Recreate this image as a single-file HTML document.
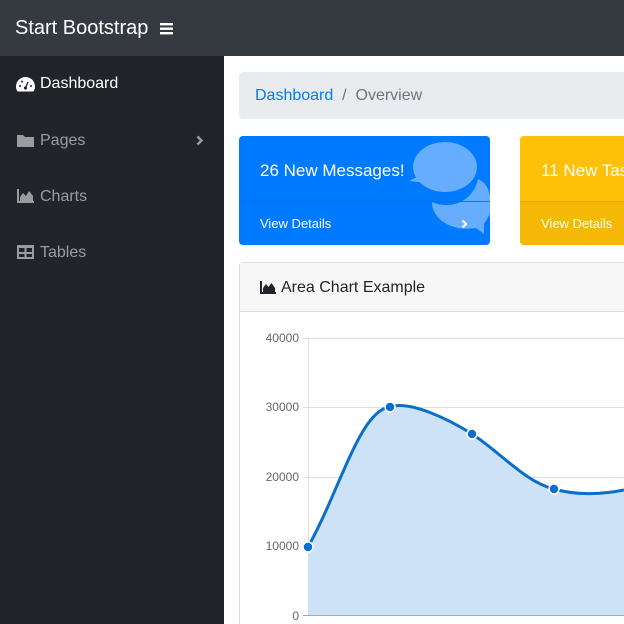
<!DOCTYPE html>
<html><head><style>
*{margin:0;padding:0;box-sizing:border-box}
html,body{width:624px;height:624px;overflow:hidden}
body{font-family:"Liberation Sans",sans-serif;background:#fff;position:relative}
.top{position:absolute;left:0;top:0;width:624px;height:56px;background:#343a40}
.brand{position:absolute;left:15px;top:17px;color:#fff;font-size:20px}
.side{position:absolute;left:0;top:56px;width:224px;height:568px;background:#212529}
.nav{position:absolute;left:40px;font-size:16px;color:#9a9da0}
.abs{position:absolute}
.bc{position:absolute;left:239px;top:72px;width:400px;height:47px;background:#e9ecef;border-radius:4px;font-size:16px;color:#6c757d;padding:15px 16px}
.card{position:absolute;top:136px;height:109px;border-radius:4px;overflow:hidden;color:#fff}
</style></head><body>
<div class="top"><div class="brand">Start Bootstrap</div>
<svg class="abs" style="left:160px;top:22px" width="13" height="13"><rect y="1" width="13" height="2.4" fill="#fff"/><rect y="5.5" width="13" height="2.4" fill="#fff"/><rect y="10" width="13" height="2.4" fill="#fff"/></svg></div>
<div class="side">
<svg class="abs" style="left:16px;top:21px" width="19" height="15" viewBox="0 0 19 15"><path d="M9.5 0A9.5 9.5 0 0 0 0 9.5c0 2 .6 3.8 1.6 5h15.8c1-1.2 1.6-3 1.6-5A9.5 9.5 0 0 0 9.5 0z" fill="#fff"/><circle cx="9.5" cy="11" r="1.6" fill="#212529"/><path d="M9.5 11L12 5" stroke="#212529" stroke-width="1.3"/><circle cx="4" cy="9" r="1" fill="#212529"/><circle cx="15" cy="9" r="1" fill="#212529"/><circle cx="6" cy="4.5" r="1" fill="#212529"/></svg>
<div class="nav" style="top:19px;color:#fff">Dashboard</div>
<svg class="abs" style="left:17px;top:78px" width="17" height="13"><path d="M0 1h6l2 2h9v10H0z" fill="#9a9da0"/></svg>
<div class="nav" style="top:76px">Pages</div>
<svg class="abs" style="left:196px;top:79px" width="8" height="11"><path d="M1.5 1.5l4 4-4 4" stroke="#9a9da0" stroke-width="2.4" fill="none"/></svg>
<svg class="abs" style="left:17px;top:133px" width="17" height="14"><path d="M1 0v13h16" stroke="#9a9da0" stroke-width="2" fill="none"/><path d="M3 12V8l3-4 3 3 3-5 4 5v5z" fill="#9a9da0"/></svg>
<div class="nav" style="top:132px">Charts</div>
<svg class="abs" style="left:17px;top:189px" width="17" height="14"><rect width="17" height="14" fill="#9a9da0"/><rect x="2" y="3" width="5.5" height="4" fill="#212529"/><rect x="9.5" y="3" width="5.5" height="4" fill="#212529"/><rect x="2" y="9" width="5.5" height="3" fill="#212529"/><rect x="9.5" y="9" width="5.5" height="3" fill="#212529"/></svg>
<div class="nav" style="top:188px">Tables</div>
</div>
<div class="bc"><span style="color:#007bff">Dashboard</span> &nbsp;/&nbsp; Overview</div>
<div class="card" style="left:239px;width:251px;background:#007bff">
<svg class="abs" style="left:0;top:0" width="251" height="109"><g fill="#66acff"><ellipse cx="206" cy="31" rx="32" ry="25"/><path d="M180 40l-10 5 18 2z"/><path d="M239 43c12 5 14 20 12 35l-6 10v10l-8-6c-25 4-44-9-44-26 15 7 40 3 46-23z"/></g><rect x="0" y="65" width="251" height="1" fill="#0069d9" opacity=".8"/></svg>
<div class="abs" style="left:21px;top:25px;font-size:17px">26 New Messages!</div>
<div class="abs" style="left:21px;top:80px;font-size:13px">View Details</div>
<svg class="abs" style="left:222px;top:83px" width="8" height="11"><path d="M1.5 1.5l3.5 3.5-3.5 3.5" stroke="#fff" stroke-width="2.2" fill="none"/></svg>
</div>
<div class="card" style="left:520px;width:130px;background:#ffc107">
<div class="abs" style="left:0;top:65px;width:130px;height:44px;background:#f5b807;border-top:1px solid #e6ac06"></div>
<div class="abs" style="left:21px;top:25px;font-size:17px">11 New Tasks!</div>
<div class="abs" style="left:21px;top:80px;font-size:13px">View Details</div>
</div>
<div class="abs" style="left:239px;top:262px;width:400px;height:380px;border:1px solid #dfdfdf;border-radius:4px">
<div style="height:49px;background:#f7f7f7;border-bottom:1px solid #dfdfdf"></div></div>
<svg class="abs" style="left:260px;top:281px" width="16" height="13"><path d="M1 0v12h15" stroke="#212529" stroke-width="2" fill="none"/><path d="M3 11V7l3-4 2.5 3 3-4 3.5 5v4z" fill="#212529"/></svg>
<div class="abs" style="left:281px;top:279px;font-size:16px;color:#212529">Area Chart Example</div>
<svg class="abs" style="left:0;top:0" width="624" height="624" font-family="Liberation Sans" font-size="12" fill="#666">
<g stroke="#e0e0e0"><line x1="303" y1="338.5" x2="624" y2="338.5"/><line x1="303" y1="407.5" x2="624" y2="407.5"/><line x1="303" y1="477.5" x2="624" y2="477.5"/><line x1="303" y1="546.5" x2="624" y2="546.5"/><line x1="308.5" y1="338" x2="308.5" y2="616"/></g>
<path d="M308 547C340 490 360 410 390 407C410 400 450 420 472 434C500 452 525 482 554 489C575 495 600 495 624 490L624 616L308 616Z" fill="#cde2f6"/>
<path d="M308 547C340 490 360 410 390 407C410 400 450 420 472 434C500 452 525 482 554 489C575 495 600 495 624 490" stroke="#0a6fcb" stroke-width="3" fill="none"/>
<line x1="303" y1="615.5" x2="624" y2="615.5" stroke="#aaa"/>
<g fill="#0a6fcb" stroke="#fff" stroke-width="1.5"><circle cx="308" cy="547" r="5"/><circle cx="390" cy="407" r="5"/><circle cx="472" cy="434" r="5"/><circle cx="554" cy="489" r="5"/></g>
<g text-anchor="end"><text x="299" y="342">40000</text><text x="299" y="411">30000</text><text x="299" y="481">20000</text><text x="299" y="550">10000</text><text x="299" y="620">0</text></g>
</svg>
</body></html>
